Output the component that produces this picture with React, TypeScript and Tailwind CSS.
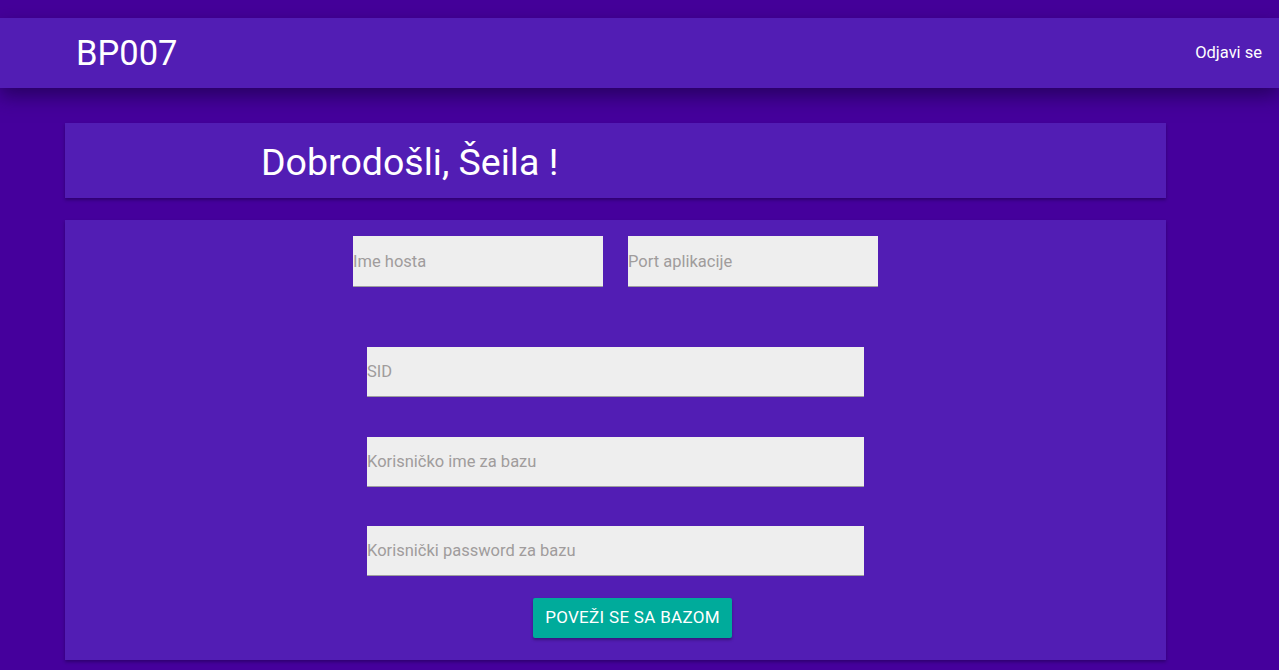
import React from "react";

const Field = ({ placeholder, className = "" }: { placeholder: string; className?: string }) => (
  <input
    placeholder={placeholder}
    className={`bg-[#eeeeee] border-0 border-b border-b-[#9e9e9e] outline-none p-0 text-[16.5px] text-[#333] placeholder:text-[#a09c9c] ${className}`}
  />
);

export default function App() {
  return (
    <div
      className="min-h-[670px] w-full bg-[#45009c] overflow-hidden"
      style={{ fontFamily: "Roboto, 'Noto Sans', Arial, sans-serif" }}
    >
      <div className="h-[18px] bg-[#45009a]" />
      <header className="relative h-[70px] bg-[#521db4] flex items-center justify-between shadow-[0_8px_18px_rgba(20,0,60,0.6)]">
        <div className="pl-[76px] text-[34.5px] text-white leading-none">BP007</div>
        <div className="pr-[17px] text-[16.5px] text-white">Odjavi se</div>
      </header>

      <div className="ml-[65px] w-[1101px] mt-[35px]">
        <div className="h-[75px] bg-[#521db4] flex items-center pl-[196px] shadow-[0_2px_3px_rgba(20,0,60,0.45)]">
          <h1 className="text-[37.5px] text-white leading-none pt-[4px]">Dobrodošli, Šeila !</h1>
        </div>

        <div className="mt-[22px] h-[440px] bg-[#521db4] pt-[16px] shadow-[0_2px_3px_rgba(20,0,60,0.45)]">
          <div className="flex gap-[25px] pl-[288px]">
            <Field placeholder="Ime hosta" className="w-[250px] h-[51px]" />
            <Field placeholder="Port aplikacije" className="w-[250px] h-[51px]" />
          </div>
          <div className="flex flex-col pl-[302px] mt-[60px]">
            <Field placeholder="SID" className="w-[497px] h-[50px]" />
            <Field placeholder="Korisničko ime za bazu" className="w-[497px] h-[50px] mt-[40px]" />
            <Field placeholder="Korisnički password za bazu" className="w-[497px] h-[50px] mt-[39px]" />
          </div>
          <div className="pl-[468px] mt-[22px]">
            <button className="w-[199px] h-[40px] rounded-[2px] bg-[#00ab9b] text-white text-[17px] uppercase tracking-[0.3px] shadow-[0_2px_3px_rgba(0,0,0,0.3)]">
              Poveži se sa bazom
            </button>
          </div>
        </div>
      </div>
    </div>
  );
}
